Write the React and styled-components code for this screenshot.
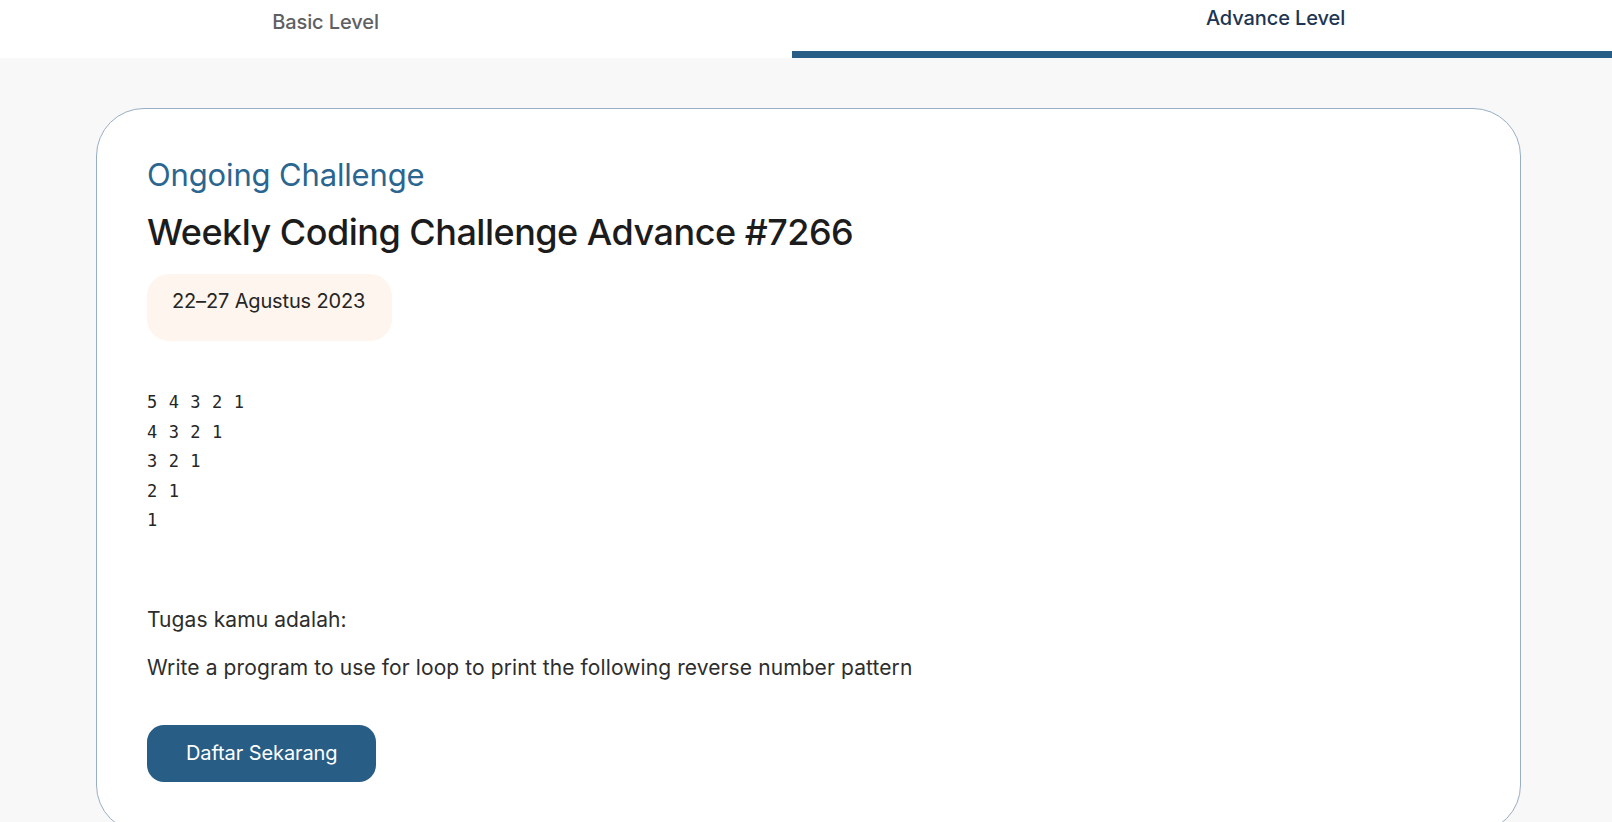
import React from "react";
import styled, { createGlobalStyle } from "styled-components";

const GlobalStyle = createGlobalStyle`
  html, body {
    margin: 0;
    padding: 0;
  }
  body {
    background: #f8f8f8;
    font-family: Inter, "Noto Sans", sans-serif;
    color: #2b2b2b;
  }
  * { box-sizing: border-box; }
`;

const Page = styled.div`
  min-height: 100vh;
  background: #f8f8f8;
`;

const TabBar = styled.nav`
  display: grid;
  grid-template-columns: 792px 1fr;
  background: #ffffff;
`;

const Tab = styled.div`
  height: 58px;
  display: flex;
  align-items: center;
  justify-content: center;
  padding-bottom: ${(p) => (p.$active ? "15px" : "14px")};
  padding-left: ${(p) => (p.$side === "right" ? "147px" : "0")};
  padding-right: ${(p) => (p.$side === "left" ? "141px" : "0")};
  font-size: 20px;
  font-weight: 500;
  letter-spacing: -0.1px;
  color: ${(p) => (p.$active ? "#1c3554" : "#5f6062")};
  border-bottom: ${(p) => (p.$active ? "7px solid #285d85" : "none")};
  cursor: pointer;
`;

const Main = styled.main`
  padding: 50px 91px 0 96px;
`;

const Card = styled.section`
  background: #ffffff;
  border: 1px solid #98aec4;
  border-radius: 48px;
  padding: 46px 50px 50px;
  display: flex;
  flex-direction: column;
  align-items: flex-start;
`;

const Eyebrow = styled.h3`
  margin: 0;
  font-size: 31px;
  line-height: 40px;
  font-weight: 400;
  letter-spacing: -0.15px;
  color: #2b6690;
`;

const Title = styled.h1`
  margin: 15px 0 0;
  font-size: 36px;
  line-height: 44px;
  font-weight: 500;
  letter-spacing: -0.5px;
  color: #1c1c1c;
`;

const DateBadge = styled.div`
  margin-top: 20px;
  width: 245px;
  height: 67px;
  padding: 12px 25px 0;
  border-radius: 22px;
  background: #fdf5ee;
  font-size: 20px;
  line-height: 30px;
  letter-spacing: -0.15px;
  white-space: nowrap;
  color: #262626;
`;

const Pattern = styled.pre`
  margin: 47px 0 0;
  font-family: "DejaVu Sans Mono", "Liberation Mono", monospace;
  font-size: 17px;
  line-height: 29.5px;
  letter-spacing: 0.6px;
  color: #262626;
`;

const Text = styled.p`
  margin: ${(p) => (p.$first ? "70px" : "20px")} 0 0;
  font-size: 21px;
  line-height: 28px;
  letter-spacing: 0.1px;
  color: #2d2d2d;
`;

const Button = styled.button`
  margin-top: 43px;
  height: 57px;
  padding: 0 39px;
  border: none;
  border-radius: 17px;
  background: #285d85;
  color: #ffffff;
  font-family: Inter, "Noto Sans", sans-serif;
  font-size: 20px;
  font-weight: 400;
  letter-spacing: -0.1px;
  cursor: pointer;
`;

const pattern = ["5 4 3 2 1", "4 3 2 1", "3 2 1", "2 1", "1"].join("\n");

export default function App() {
  return (
    <Page>
      <GlobalStyle />
      <TabBar>
        <Tab $side="left">Basic Level</Tab>
        <Tab $side="right" $active>
          Advance Level
        </Tab>
      </TabBar>
      <Main>
        <Card>
          <Eyebrow>Ongoing Challenge</Eyebrow>
          <Title>Weekly Coding Challenge Advance #7266</Title>
          <DateBadge>22–27 Agustus 2023</DateBadge>
          <Pattern>{pattern}</Pattern>
          <Text $first>Tugas kamu adalah:</Text>
          <Text>
            Write a program to use for loop to print the following reverse number pattern
          </Text>
          <Button>Daftar Sekarang</Button>
        </Card>
      </Main>
    </Page>
  );
}
